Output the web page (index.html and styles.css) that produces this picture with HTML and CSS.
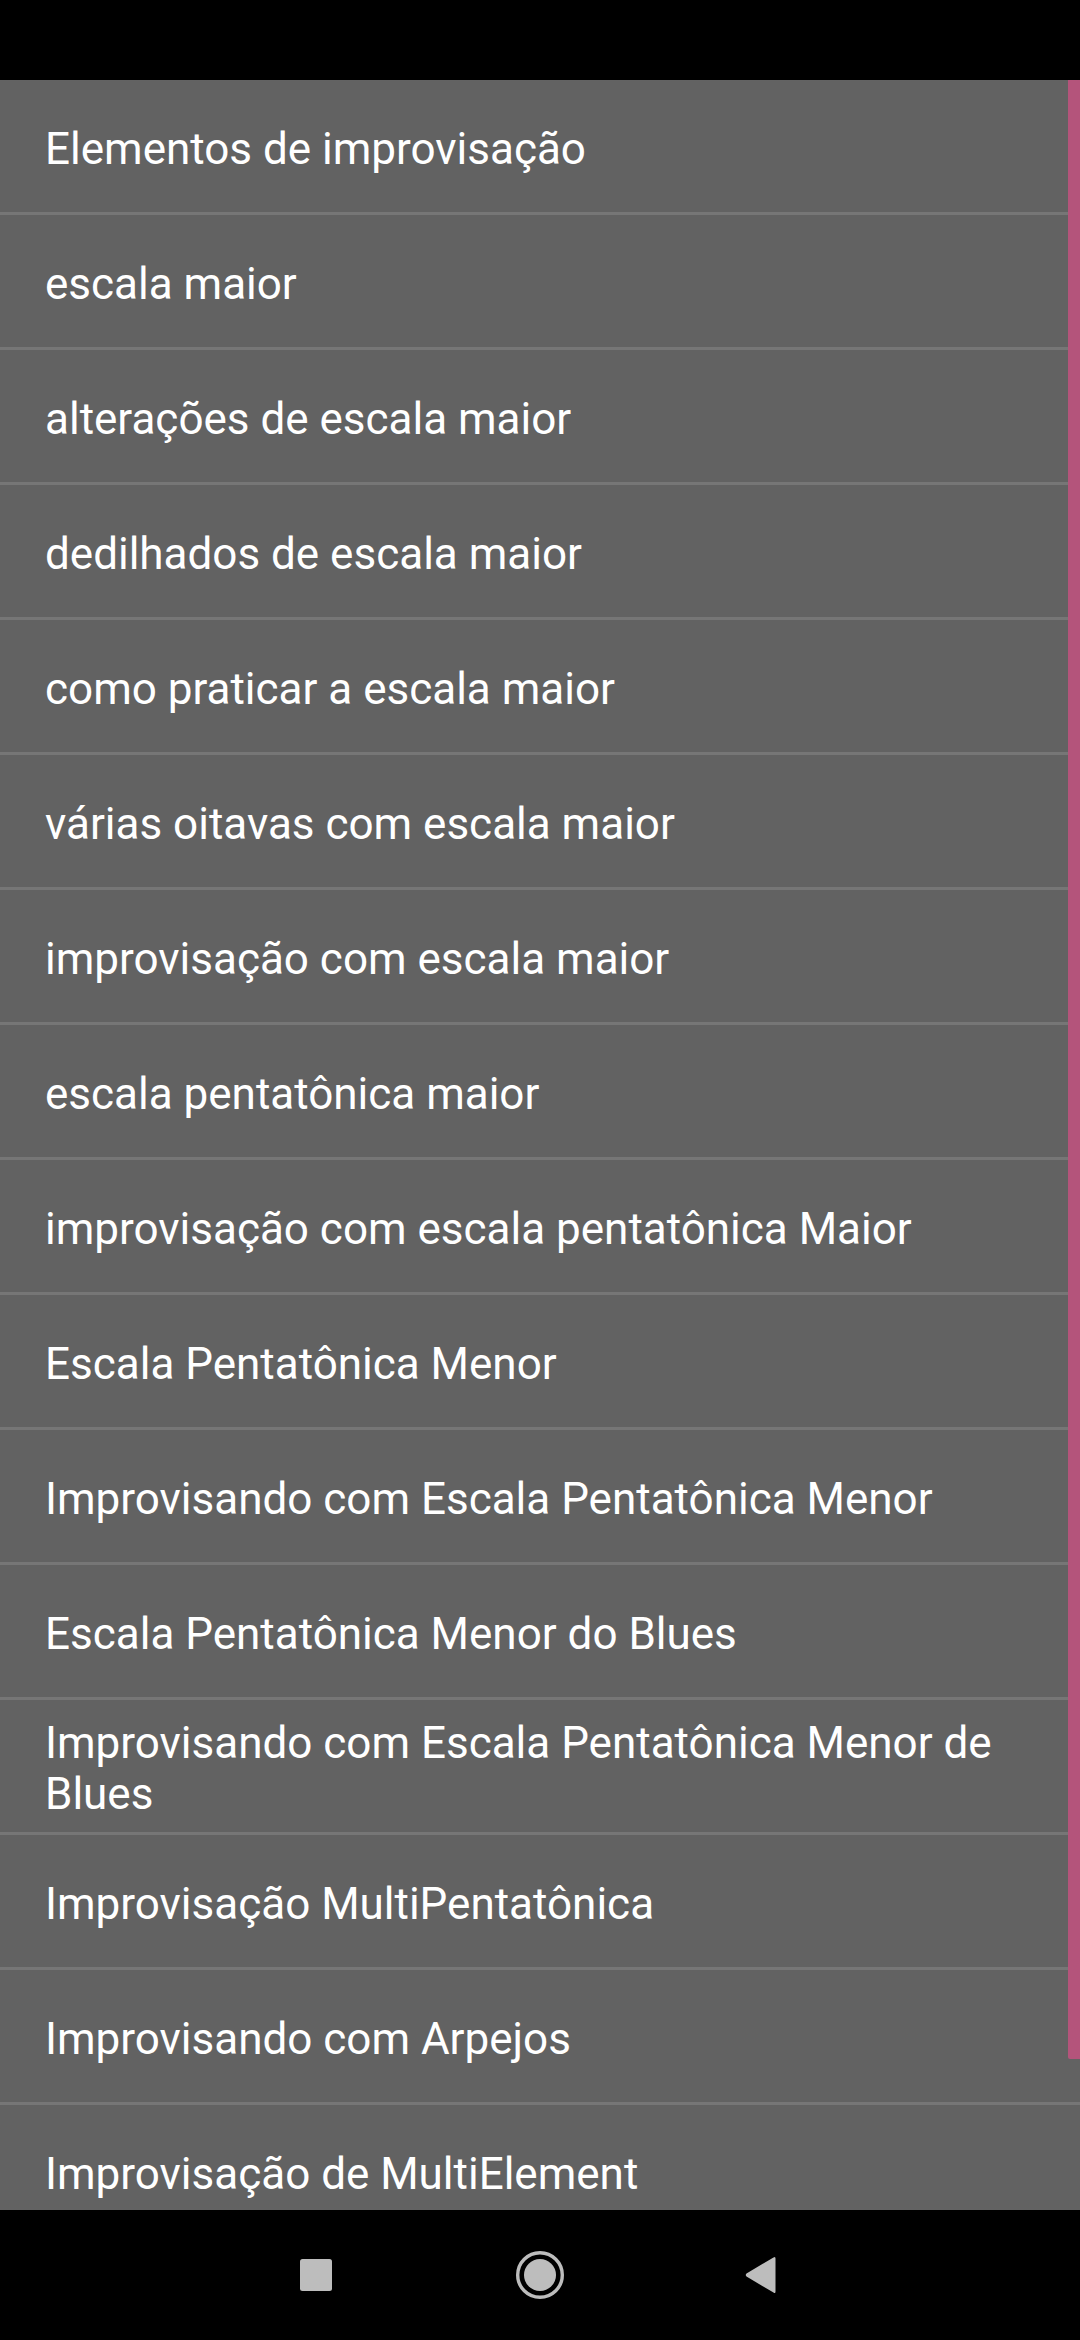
FILE: index.html
```html
<!DOCTYPE html>
<html lang="pt">
<head>
    <meta charset="UTF-8">
    <meta name="viewport" content="width=device-width, initial-scale=1.0">
    <title>Improvisação</title>
    <link rel="stylesheet" href="styles.css">
</head>
<body>
    <div class="screen">
        <div class="status-bar"></div>
        <div class="list-wrap">
            <ul class="list">
                <li class="item">Elementos de improvisação</li>
                <li class="item">escala maior</li>
                <li class="item">alterações de escala maior</li>
                <li class="item">dedilhados de escala maior</li>
                <li class="item">como praticar a escala maior</li>
                <li class="item">várias oitavas com escala maior</li>
                <li class="item">improvisação com escala maior</li>
                <li class="item">escala pentatônica maior</li>
                <li class="item">improvisação com escala pentatônica Maior</li>
                <li class="item">Escala Pentatônica Menor</li>
                <li class="item">Improvisando com Escala Pentatônica Menor</li>
                <li class="item">Escala Pentatônica Menor do Blues</li>
                <li class="item">Improvisando com Escala Pentatônica Menor de Blues</li>
                <li class="item">Improvisação MultiPentatônica</li>
                <li class="item">Improvisando com Arpejos</li>
                <li class="item">Improvisação de MultiElement</li>
            </ul>
            <div class="scrollbar"></div>
        </div>
        <div class="nav-bar">
            <svg class="nav-icon recents" width="48" height="48" viewBox="0 0 48 48">
                <rect x="8" y="8" width="32" height="32" rx="2.5" fill="#bdbdbd"/>
            </svg>
            <svg class="nav-icon" width="48" height="48" viewBox="0 0 48 48">
                <circle cx="24" cy="24" r="22.3" fill="none" stroke="#bdbdbd" stroke-width="3.4"/>
                <circle cx="24" cy="24" r="16" fill="#bdbdbd"/>
            </svg>
            <svg class="nav-icon" width="48" height="48" viewBox="0 0 48 48">
                <path d="M39.5 7.5 L39.5 40.5 Q39.5 43 37.5 41.6 L10.5 25.6 Q9 24 10.5 22.4 L37.5 6.4 Q39.5 5 39.5 7.5 Z" fill="#bdbdbd"/>
            </svg>
        </div>
    </div>
</body>
</html>
```

FILE: styles.css
```css
body {
    margin: 0;
    background: #000;
    font-family: Roboto, "Noto Sans", sans-serif;
}
.screen {
    width: 1080px;
    height: 2340px;
    display: flex;
    flex-direction: column;
    overflow: hidden;
}
.status-bar {
    height: 80px;
    flex-shrink: 0;
    background: #000;
}
.list-wrap {
    position: relative;
    flex: 1;
    overflow: hidden;
    background: #626262;
}
.list {
    list-style: none;
    margin: 0;
    padding: 0;
}
.item {
    display: flex;
    align-items: center;
    height: 132px;
    box-sizing: border-box;
    height: 135px;
    padding: 6px 30px 0 45px;
    border-bottom: 3px solid #767676;
    color: #fff;
    font-size: 44px;
    line-height: 1.15;
}
.scrollbar {
    position: absolute;
    top: 0;
    right: 0;
    width: 12px;
    height: 1979px;
    background: #b4547b;
    border-bottom-left-radius: 2px;
}
.nav-bar {
    height: 130px;
    flex-shrink: 0;
    background: #000;
    display: flex;
    align-items: center;
    gap: 172px;
    padding-left: 292px;
}
.nav-icon {
    display: block;
}
.recents {
    margin-right: 4px;
}
```
